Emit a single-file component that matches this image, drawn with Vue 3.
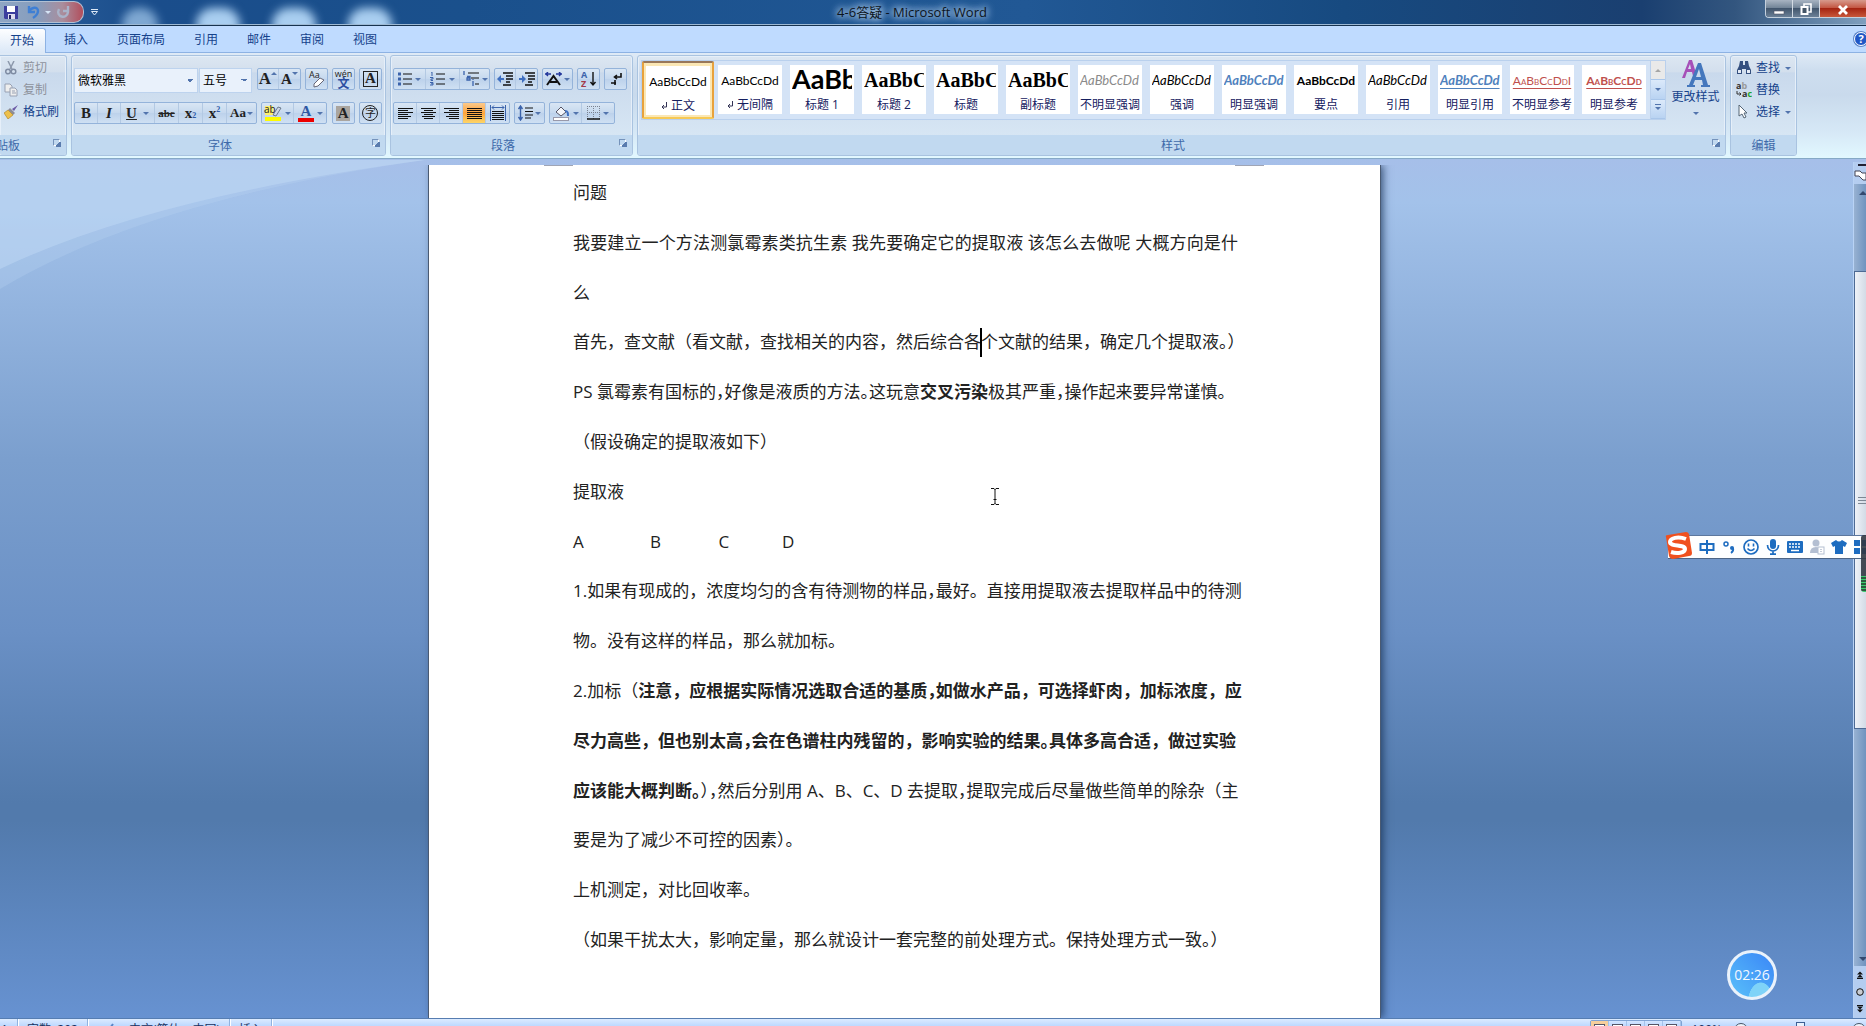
<script setup>
import { ref } from 'vue'

const tabs = ['开始', '插入', '页面布局', '引用', '邮件', '审阅', '视图']
const active = ref('开始')

const styles = [
  { name: '正文', mark: true, text: 'AaBbCcDd', kind: 'plain', on: true },
  { name: '无间隔', mark: true, text: 'AaBbCcDd', kind: 'plain' },
  { name: '标题 1', text: 'AaBb', kind: 'h1' },
  { name: '标题 2', text: 'AaBbC', kind: 'serif' },
  { name: '标题', text: 'AaBbC', kind: 'serif' },
  { name: '副标题', text: 'AaBbC', kind: 'serif' },
  { name: '不明显强调', text: 'AaBbCcDd', kind: 'it gray' },
  { name: '强调', text: 'AaBbCcDd', kind: 'it' },
  { name: '明显强调', text: 'AaBbCcDd', kind: 'it blue bold' },
  { name: '要点', text: 'AaBbCcDd', kind: 'plain bold' },
  { name: '引用', text: 'AaBbCcDd', kind: 'it' },
  { name: '明显引用', text: 'AaBbCcDd', kind: 'it blue bold rule' },
  { name: '不明显参考', text: 'AaBbCcDdI', kind: 'plain caps red rule' },
  { name: '明显参考', text: 'AaBbCcDd', kind: 'plain caps red rule bold' }
]

// Each line is a list of runs: t = text, b = bold, h = half-width punctuation, caret = insertion point
const lines = [
  [{ t: '问题' }],
  [{ t: '我要建立一个方法测氯霉素类抗生素 我先要确定它的提取液 该怎么去做呢 大概方向是什' }],
  [{ t: '么' }],
  [{ t: '首先，查文献（看文献，查找相关的内容，然后综合各' }, { caret: true }, { t: '个文献的结果，确定几个提取液' }, { t: '。', h: true }, { t: '）' }],
  [{ t: 'PS 氯霉素有国标的' }, { t: '，', h: true }, { t: '好像是液质的方法' }, { t: '。', h: true }, { t: '这玩意' }, { t: '交叉污染', b: true }, { t: '极其严重' }, { t: '，', h: true }, { t: '操作起来要异常谨慎。' }],
  [{ t: '（假设确定的提取液如下）' }],
  [{ t: '提取液' }],
  [{ t: 'A               B             C            D' }],
  [{ t: '1.如果有现成的，浓度均匀的含有待测物的样品' }, { t: '，', h: true }, { t: '最好。直接用提取液去提取样品中的待测' }],
  [{ t: '物。没有这样的样品，那么就加标。' }],
  [{ t: '2.加标（' }, { t: '注意，应根据实际情况选取合适的基质', b: true }, { t: '，', b: true, h: true }, { t: '如做水产品，可选择虾肉，加标浓度，应', b: true }],
  [{ t: '尽力高些，但也别太高', b: true }, { t: '，', b: true, h: true }, { t: '会在色谱柱内残留的，影响实验的结果', b: true }, { t: '。', b: true, h: true }, { t: '具体多高合适，做过实验', b: true }],
  [{ t: '应该能大概判断', b: true }, { t: '。', b: true, h: true }, { t: '），', h: true }, { t: '然后分别用 A、B、C、D 去提取' }, { t: '，', h: true }, { t: '提取完成后尽量做些简单的除杂（主' }],
  [{ t: '要是为了减少不可控的因素' }, { t: '）。', h: true }],
  [{ t: '上机测定，对比回收率。' }],
  [{ t: '（如果干扰太大，影响定量，那么就设计一套完整的前处理方式。保持处理方式一致' }, { t: '。', h: true }, { t: '）' }]
]
</script>

<template>
  <div class="screen">
    <div class="window">
      <header class="title">
        <i class="spot s1"></i><i class="spot s2"></i><i class="spot s3"></i><i class="spot s4"></i>
        <div class="quick">
          <button aria-label="保存"><svg width="14" height="14" viewBox="0 0 14 14"><path d="M0 1h14v13H1L0 13z" fill="#3c3f9e"/><path d="M3 1h8v6H3z" fill="#fff"/><path d="M4 9h7v5H4z" fill="#dde"/><path d="M5 10h2v4H5z" fill="#23246a"/></svg></button>
          <button aria-label="撤消"><svg width="13" height="14" viewBox="0 0 13 14"><path d="M2 1v6h6M2 7C4 2 11 1 11 6c0 3-2 5-5 7" fill="none" stroke="#3f7fd4" stroke-width="2.4"/></svg></button>
          <i class="arr"></i>
          <button aria-label="重复"><svg width="14" height="14" viewBox="0 0 14 14"><path d="M12 1v5H7M3 4C-1 12 11 15 12 7" fill="none" stroke="#a9b3c9" stroke-width="2.4"/></svg></button>
        </div>
        <svg class="more" width="7" height="7" viewBox="0 0 7 7"><path d="M0 .5h7" stroke="#dce8f6"/><path d="M.5 2.500h6L3.500 6z" fill="none" stroke="#dce8f6"/></svg>
        <h1>4-6答疑 - Microsoft Word</h1>
        <div class="winbtns">
          <button aria-label="最小化"><svg width="12" height="14" viewBox="0 0 12 14"><rect x="1" y="9" width="10" height="3" fill="#fff" stroke="#556" stroke-width=".6"/></svg></button>
          <button aria-label="还原"><svg width="12" height="14" viewBox="0 0 12 14"><path d="M4 5V2h7v8H8" fill="none" stroke="#fff" stroke-width="1.600"/><rect x="1.500" y="5" width="6" height="7" fill="#456" stroke="#fff" stroke-width="2"/></svg></button>
          <button class="close" aria-label="关闭"><svg width="12" height="14" viewBox="0 0 12 14"><path d="M2 4l8 8M10 4l-8 8" stroke="#fff" stroke-width="2.800"/></svg></button>
        </div>
      </header>

      <nav class="tabs">
        <button v-for="t in tabs" :key="t" :class="{ on: active === t }" @click="active = t">{{ t }}</button>
        <span class="fill"></span>
        <button class="help" aria-label="帮助">?</button>
      </nav>

      <div class="ribbon">
        <section class="group clip">
          <div class="col">
            <button class="off"><svg width="14" height="14" viewBox="0 0 14 14"><path d="M4 0l4 8M10 0L6 8" stroke="#8d99ac" stroke-width="1.500"/><circle cx="4" cy="10.500" r="2.300" fill="none" stroke="#7f8ca3" stroke-width="1.500"/><circle cx="9.500" cy="10.500" r="2.300" fill="none" stroke="#7f8ca3" stroke-width="1.500"/></svg>剪切</button>
            <button class="off"><svg width="14" height="14" viewBox="0 0 14 14"><path d="M1 1h5l2 2v6H1z" fill="#eee" stroke="#98a1b3"/><path d="M6 5h5l2 2v6H6z" fill="#eee" stroke="#98a1b3"/><path d="M8 8h3M8 10h4" stroke="#98a1b3"/></svg>复制</button>
            <button><svg width="14" height="14" viewBox="0 0 14 14"><path d="M14 0l-4 6-2-2z" fill="#6c5aa5"/><path d="M6 3l5 5-2 2-5-5z" fill="#8c8c96"/><path d="M4 5l5 5-5 4-4-6z" fill="#edc04c" stroke="#a97d1f" stroke-width=".6"/></svg>格式刷</button>
          </div>
          <footer>剪贴板<i class="launch"></i></footer>
        </section>

        <section class="group font">
          <div class="rows">
            <div class="row">
              <div class="combo"><select class="face" aria-label="字体"><option>微软雅黑</option></select><select class="size" aria-label="字号"><option>五号</option></select></div>
              <div class="set w22"><button class="sf big">A<i class="arr up raise"></i></button><button class="sf">A<i class="arr raise"></i></button></div>
              <div class="set w22"><button aria-label="清除格式"><svg width="18" height="18" viewBox="0 0 18 18"><text x="1" y="8" font-size="9" fill="#222">Aa</text><path d="M6 14l6-6 4 2-6 6-4 1z" fill="#fff" stroke="#667"/></svg></button></div>
              <div class="set w22"><button class="wen"><b>wén</b><em>文</em></button></div>
              <div class="set w22"><button class="sf"><span class="boxed">A</span></button></div>
            </div>
            <div class="row">
              <div class="set"><button class="sf w23">B</button><button class="sf w23 ital">I</button><button class="sf w35"><u>U</u><i class="arr"></i></button><button class="sf w24 small"><s>abc</s></button><button class="sf w24">x<sub>2</sub></button><button class="sf w24">x<sup>2</sup></button><button class="sf w29 mid">Aa<i class="arr"></i></button></div>
              <div class="set"><button class="w32"><svg width="18" height="18" viewBox="0 0 18 18"><rect x="1" y="2" width="8" height="9" fill="#ffef6a"/><text x="0" y="9" font-size="10" fill="#222">ab</text><path d="M9 11l5-8 3 1-5 8z" fill="#cfd6e6" stroke="#567" stroke-width=".8"/><path d="M1 13h16v4H1z" fill="#fdfb00"/></svg><i class="arr"></i></button><button class="w32"><span class="fcol">A</span><i class="arr"></i></button></div>
              <div class="set w22"><button class="sf"><span class="shade">A</span></button></div>
              <div class="set w22"><button><span class="ring">字</span></button></div>
            </div>
          </div>
          <footer>字体<i class="launch"></i></footer>
        </section>

        <section class="group para">
          <div class="rows">
            <div class="row">
              <div class="set">
                <button class="w32" aria-label="项目符号"><svg width="14" height="14" viewBox="0 0 14 14"><path d="M5 2h9M5 7h9M5 12h9" stroke="#111" stroke-width="1.200"/><path d="M0 2h3M0 7h3M0 12h3" stroke="#3b63ab" stroke-width="3"/></svg><i class="arr"></i></button>
                <button class="w35" aria-label="编号"><svg width="15" height="14" viewBox="0 0 15 14"><path d="M6 2h9M6 7h9M6 12h9" stroke="#111" stroke-width="1.200"/><path d="M1 0h1v4M0 5.500h3v1.500H1v1.500h2M0 10.500h3V13H0M1 11.800h2" fill="none" stroke="#3b63ab"/></svg><i class="arr"></i></button>
                <button class="w29" aria-label="多级列表"><svg width="18" height="16" viewBox="0 0 18 16"><path d="M6 2h11M9 7h8M13 13h4" stroke="#111" stroke-width="1.200"/><path d="M2 0v4M5 5.500h3V9H5V7h3M11 10v5M11 8v1" fill="none" stroke="#3b63ab" stroke-width="1.300"/></svg><i class="arr"></i></button>
              </div>
              <div class="set w22">
                <button aria-label="减少缩进"><svg width="16" height="14" viewBox="0 0 16 14"><path d="M6 1h10M9 4h7M9 7h7M9 10h4M6 13h8" stroke="#111" stroke-width="1.600"/><path d="M0 7l4-4v3h3v2H4v3z" fill="#3f6fc0"/></svg></button>
                <button aria-label="增加缩进"><svg width="16" height="14" viewBox="0 0 16 14"><path d="M6 1h10M9 4h7M9 7h7M9 10h4M6 13h8" stroke="#111" stroke-width="1.600"/><path d="M7 7L3 3v3H0v2h3v3z" fill="#3f6fc0"/></svg></button>
              </div>
              <div class="set"><button class="w29" aria-label="中文版式"><svg width="17" height="14" viewBox="0 0 17 14"><path d="M2 13l6.500-9 6.500 9M5 10h7" fill="none" stroke="#111" stroke-width="2"/><path d="M0 2h6M3 0L1 2l2 2M11 2h6M14 0l2 2-2 2" fill="none" stroke="#23379c" stroke-width="1.400"/></svg><i class="arr"></i></button></div>
              <div class="set w22"><button aria-label="排序"><svg width="16" height="18" viewBox="0 0 16 18"><text x="0" y="8" font-size="9" font-weight="700" fill="#3b63ab">A</text><text x="0" y="17" font-size="9" font-weight="700" fill="#a33a4a">Z</text><path d="M12 2v12M9.500 12l2.500 3 2.500-3" fill="none" stroke="#111" stroke-width="1.400"/></svg></button></div>
              <div class="set w22"><button aria-label="显示编辑标记"><svg width="12" height="14" viewBox="0 0 12 14"><path d="M11 1v4H5M7 3L4.500 5 7 7M5 8v5M1 11h5" fill="none" stroke="#111" stroke-width="1.600"/></svg></button></div>
            </div>
            <div class="row">
              <div class="set">
                <button class="w23" aria-label="左对齐"><svg width="15" height="12" viewBox="0 0 15 12"><path d="M0 1.500h15M0 3.500h10M0 5.500h15M0 7.500h10M0 9.500h13M0 11.500h10" stroke="#111"/></svg></button>
                <button class="w23" aria-label="居中"><svg width="15" height="12" viewBox="0 0 15 12"><path d="M0 1.500h15M3 3.500h9M0 5.500h15M3 7.500h9M1 9.500h13M3 11.500h9" stroke="#111"/></svg></button>
                <button class="w23" aria-label="右对齐"><svg width="15" height="12" viewBox="0 0 15 12"><path d="M0 1.500h15M5 3.500h10M0 5.500h15M5 7.500h10M2 9.500h13M5 11.500h10" stroke="#111"/></svg></button>
                <button class="w23 hot" aria-label="两端对齐"><svg width="15" height="12" viewBox="0 0 15 12"><path d="M0 1.500h15M0 3.500h15M0 5.500h15M0 7.500h15M0 9.500h15M0 11.500h15" stroke="#111"/></svg></button>
                <button class="w23" aria-label="分散对齐"><svg width="16" height="16" viewBox="0 0 16 16"><path d="M2 6.500h12M2 8.500h12M2 10.500h12M2 12.500h12M2 14.500h12" stroke="#111"/><path d="M.5 0v16M15.500 0v16M2 2.500h12M4 .5l-2 2 2 2M12 .5l2 2-2 2" fill="none" stroke="#3b63ab"/></svg></button>
              </div>
              <div class="set"><button class="w29" aria-label="行距"><svg width="15" height="16" viewBox="0 0 15 16"><path d="M7 3h8M7 6.500h8M7 10h8M7 13h6" stroke="#111" stroke-width="1.200"/><path d="M2.500 1v14M.5 4l2-3 2 3M.5 12l2 3 2-3" fill="none" stroke="#3b63ab" stroke-width="1.400"/></svg><i class="arr"></i></button></div>
              <div class="set">
                <button class="w32" aria-label="底纹"><svg width="17" height="16" viewBox="0 0 17 16"><path d="M3 7l5-5 5 5-5 4z" fill="#f4f6fb" stroke="#556"/><path d="M12 6c3 0 3 2 3 5" fill="none" stroke="#3f6fc0" stroke-width="2"/><rect x=".5" y="12.500" width="15" height="3" fill="#fff" stroke="#99a"/></svg><i class="arr"></i></button>
                <button class="w32" aria-label="边框"><svg width="13" height="14" viewBox="0 0 13 14"><path d="M0 .5h13M0 6.500h13M.5 0v13M6.500 0v13M12.500 0v13" stroke="#7a8291" stroke-dasharray="1 1"/><path d="M0 13h13" stroke="#111" stroke-width="1.500"/></svg><i class="arr"></i></button>
              </div>
            </div>
          </div>
          <footer>段落<i class="launch"></i></footer>
        </section>

        <section class="group stylesgrp">
          <div class="stylebody">
            <div class="gallery">
              <button v-for="(s, i) in styles" :key="i" class="tile" :class="{ sel: s.on }">
                <span class="card"><span class="prev" :class="s.kind">{{ s.text }}</span><span class="nm"><svg v-if="s.mark" width="6" height="8" viewBox="0 0 6 8"><path d="M5.500 0v5H1M3 3L1 5l2 2" fill="none" stroke="#335"/></svg>{{ s.name }}</span></span>
              </button>
              <div class="spin">
                <button class="dim" aria-label="上一行"><i class="arr up"></i></button>
                <button aria-label="下一行"><i class="arr"></i></button>
                <button aria-label="其他"><i class="arr bar"></i></button>
              </div>
            </div>
            <button class="change">
              <svg width="30" height="28" viewBox="0 0 30 28"><path d="M1 18L8 0h3l4 13-3 3-1-4H6l-2 6zM7 9h3L9 4z" fill="#a650b8" fill-rule="evenodd"/><path d="M6 27v-2h2L17 3h3l7 22h2v2h-9v-2h2l-1-5h-7l-2 5h2v2zM15 17h5l-2-8z" fill="#4477bd" fill-rule="evenodd"/></svg>
              更改样式<i class="arr"></i>
            </button>
          </div>
          <footer>样式<i class="launch"></i></footer>
        </section>

        <section class="group edit">
          <div class="col">
            <button><svg width="16" height="14" viewBox="0 0 16 14"><path d="M4 0h3v4h2V0h3l1 5 2 4v4h-5V8H6v5H1V9l2-4z" fill="#35507f"/><path d="M2 9h3v3H2zM11 9h3v3h-3z" fill="#e4ebf6"/></svg>查找<i class="arr"></i></button>
            <button><svg width="16" height="16" viewBox="0 0 16 16"><text x="0" y="7" font-size="9" font-weight="700" fill="#333">a<tspan fill="#999">b</tspan></text><text x="6" y="15" font-size="9" font-weight="700" fill="#333">a<tspan fill="#1fa32f">c</tspan></text><path d="M1 9v3h4M3.500 10.500L5 12l-1.500 1.500" fill="none" stroke="#333"/></svg>替换</button>
            <button><svg width="16" height="14" viewBox="0 0 16 14"><path d="M3 0v11l3-2 2 4 2-1-2-4h3z" fill="#fff" stroke="#567"/></svg>选择<i class="arr"></i></button>
          </div>
          <footer class="mid0">编辑</footer>
        </section>
      </div>

      <main class="work">
        <svg class="swoosh" width="430" height="134" viewBox="0 0 430 134"><path d="M0 130Q150 40 425 1H0z" fill="#b9d3f2" opacity=".3"/><path d="M0 110Q150 38 425 1L0 1z" fill="#c3dcf6" opacity=".45"/></svg>
        <div class="canvas">
          <article class="page">
            <i class="crop l"></i><i class="crop r"></i>
            <p v-for="(l, i) in lines" :key="i" :class="{ full: i === 1 }"><template v-for="(r, j) in l" :key="j"><i v-if="r.caret" class="caret"></i><span v-else :class="{ b: r.b, h: r.h }">{{ r.t }}</span></template></p>
            <svg class="ibeam" width="8" height="17" viewBox="0 0 8 17"><path d="M0 .5h3l1 1 1-1h3M4 1v15M0 16.500h3l1-1 1 1h3M2.500 11.500h3" fill="none" stroke="#111"/></svg>
          </article>
        </div>
        <aside class="scroll">
          <button class="split" aria-label="标尺"><svg width="12" height="18" viewBox="0 0 12 18"><path d="M4 1h8" stroke="#223" stroke-width="2"/><path d="M1 7h5l2 2h4v7H9l-4-4H1z" fill="#fff" stroke="#445"/></svg></button>
          <div class="track">
            <i class="arr up"></i>
            <div class="thumb"><i></i></div>
            <i class="arr"></i>
          </div>
          <div class="browse">
            <svg width="8" height="8" viewBox="0 0 8 8"><path d="M1 3.500L4 .5l3 3zM1 6.500l3-3 3 3zM1 7h6v1H1z" fill="#111"/></svg>
            <svg width="8" height="8" viewBox="0 0 8 8"><circle cx="4" cy="4" r="3.300" fill="#c9ccd2" stroke="#111"/></svg>
            <svg width="8" height="8" viewBox="0 0 8 8"><path d="M1 0h6v1H1zM1 1.500l3 3 3-3zM1 4.500l3 3 3-3z" fill="#111"/></svg>
          </div>
        </aside>

        <div class="ime">
          <svg class="slogo" width="28" height="28" viewBox="0 0 28 28"><path d="M2 5Q1 3 4 3L22 0q2 0 3 2l3 19q0 3-3 3L9 27q-3 0-4-3z" fill="#f0501e"/><path d="M22 7C14 4 6 6 6 10c0 5 15 2 15 7 0 4-8 5-14 3" fill="none" stroke="#fff" stroke-width="4"/></svg>
          <svg width="16" height="16" viewBox="0 0 16 16"><path d="M1.500 5h13v6h-13zM8 1v14" fill="none" stroke="#1d6cc0" stroke-width="2"/></svg>
          <svg width="16" height="16" viewBox="0 0 16 16"><circle cx="5" cy="5" r="2" fill="none" stroke="#1d6cc0" stroke-width="1.500"/><circle cx="11" cy="9" r="2" fill="#1d6cc0"/><path d="M12 9q1 3-2 5" fill="none" stroke="#1d6cc0" stroke-width="1.800"/></svg>
          <svg width="16" height="16" viewBox="0 0 16 16"><circle cx="8" cy="8" r="7" fill="none" stroke="#1d6cc0" stroke-width="1.700"/><path d="M5.500 4.500v3M10.500 4.500v3M4.500 9.500q3.500 4 7 0" fill="none" stroke="#1d6cc0" stroke-width="1.600"/></svg>
          <svg width="16" height="16" viewBox="0 0 16 16"><rect x="5" y="0" width="6" height="10" rx="3" fill="#1d6cc0"/><path d="M2.500 6c0 8 11 8 11 0M8 12v4M5 15.200h6" fill="none" stroke="#1d6cc0" stroke-width="1.700"/></svg>
          <svg width="16" height="16" viewBox="0 0 16 16"><rect x="0" y="2" width="16" height="12" rx="1" fill="#1d6cc0"/><path d="M2 5h12M2 8h12" stroke="#fff" stroke-width="1.500" stroke-dasharray="2 1"/><path d="M4 11.500h8" stroke="#fff" stroke-width="1.500"/></svg>
          <svg width="16" height="16" viewBox="0 0 16 16"><circle cx="7" cy="4" r="3.500" fill="#b4bfd2"/><path d="M1 14q0-6 6-6t6 6z" fill="#b4bfd2"/><rect x="9" y="8" width="6" height="7" fill="#fff" stroke="#b4bfd2"/><path d="M12 10v1M12 12v1" stroke="#8d9ab3"/></svg>
          <svg width="16" height="16" viewBox="0 0 16 16"><path d="M5 1q3 3 6 0l5 3-2 4-2-1v8H4V7L2 8 0 4z" fill="#1d6cc0"/></svg>
          <svg width="16" height="16" viewBox="0 0 16 16"><path d="M1 1h6v6H1zM9 1h6v6H9zM1 9h6v6H1zM9 9h6v6H9z" fill="#1d6cc0"/></svg>
        </div>
        <div class="meter"></div>
        <div class="timer">02:26</div>
      </main>

      <footer class="status">
        <span class="st pg">1</span><span class="st wc">字数: 292</span>
        <span class="st sp"><svg width="14" height="14" viewBox="0 0 14 14"><path d="M2 7l3 5 8-11" fill="none" stroke="#5a86c6" stroke-width="2"/></svg></span>
        <span class="st lang">中文(简体，中国)</span><span class="st ins">插入</span>
        <span class="fill"></span>
        <div class="views"><button v-for="n in 5" :key="n" :class="{ on: n === 1 }" aria-label="视图"><i></i></button></div>
        <span class="pct">100%</span>
        <label class="zoom"><i class="knob">−</i><input type="range" min="10" max="190" value="100" aria-label="显示比例"><i class="knob">+</i></label>
      </footer>
    </div>
  </div>
</template>

<style>
body { margin: 0; }
</style>

<style scoped>
.screen { height: 100vh; overflow: hidden; font: 12px/16px "Open Sans", "Noto Sans CJK SC", sans-serif; color: #15428b; }
.window { min-height: calc(100vh + 14px); display: flex; flex-direction: column; }
button, select { font: inherit; color: inherit; border: 0; background: none; padding: 0; margin: 0; }
button { display: flex; align-items: center; justify-content: center; }
i { font-style: normal; }
svg { flex: none; }
.fill { flex: 1; }
.arr { flex: none; width: 0; height: 0; border: 3px solid transparent; border-top: 3px solid #5274ad; border-bottom: 0; }
.arr.up { border-top: 0; border-bottom: 3px solid #5274ad; }
.arr.bar { position: relative; }
.arr.bar::before { content: ""; position: absolute; left: -3px; top: -6px; width: 6px; height: 1px; background: #5274ad; }

.title { position: relative; height: 24px; display: flex; align-items: center; overflow: hidden; border-bottom: 1px solid #9db9d4; box-shadow: 0 1px #16324f; margin-bottom: 1px; background: linear-gradient(90deg, #2c609c, #1a4d8b 8%, #1a508c 25%, #215895 55%, #174a80 72%, #1a3f70 88%, #33567f 93%, #7f9fbe); }
.spot { position: absolute; top: 8px; width: 44px; height: 34px; border-radius: 18px; background: #a9cef0; filter: blur(5px); }
.s1 { left: 122px; width: 36px; opacity: .7; }
.s2 { left: 196px; }
.s3 { left: 272px; }
.s4 { left: 348px; }
.quick { position: relative; width: 84px; height: 22px; box-sizing: border-box; padding-left: 4px; display: flex; align-items: center; gap: 9px; border: 1px solid #b0c0d4; border-left: 0; border-radius: 0 10px 10px 0; background: linear-gradient(90deg, #8fa6c4, #869dbd 45%, #a98e9d 75%, #b24e5c); }
.quick .arr { margin: 0 -4px; border-top-color: #d5e4f5; }
.more { margin-left: 7px; position: relative; }
h1 { position: absolute; left: 0; right: 42px; margin: 0; text-align: center; font-size: 13px; font-weight: 400; line-height: 27px; color: #0c1420; text-shadow: 0 0 6px #b4d0ee, 0 0 8px #b4d0ee, 0 0 10px #b4d0ee; }
.winbtns { position: relative; margin-left: auto; align-self: flex-start; display: flex; height: 17px; border: 1px solid #c4d0dd; border-top: 0; border-right: 0; border-radius: 0 0 0 4px; overflow: hidden; }
.winbtns button { width: 27px; background: linear-gradient(#a8b4c2, #6d8094 50%, #42566d 50%, #6b8097); border-right: 1px solid #d3dbe4; }
.winbtns .close { width: 46px; border: 0; background: linear-gradient(#d79a8c, #c1503c 50%, #a52512 50%, #c8573a); }

.tabs { height: 27px; display: flex; align-items: flex-end; background: #bfdbff; box-sizing: border-box; border-bottom: 1px solid #8db2e3; }
.tabs button { height: 25px; padding: 0 15px 0 14px; position: relative; }
.tabs .on { padding: 0 11px 0 10px; margin-right: 4px; border: 1px solid #8db2e3; border-left: 0; border-bottom: 0; margin-bottom: -1px; border-radius: 0 3px 0 0; background: linear-gradient(#fdfeff, #dbe8f7); }
.tabs .help { width: 14px; height: 14px; box-sizing: border-box; padding: 0; margin: 0 -2px 6px 0; border-radius: 50%; border: 1px solid #fff; box-shadow: 0 0 0 1px #5a84c8; background: #2057c6; color: #fff; font-weight: 700; font-size: 11px; }

.ribbon { height: 106px; box-sizing: border-box; padding-top: 2px; display: flex; align-items: flex-start; gap: 4px; border-bottom: 1px solid #86a9c6; background: linear-gradient(#dfeaf6, #cedeef 16%, #c9daec 40%, #d6e8f6 75%, #e2f8ff); overflow: hidden; }
.group { flex: none; height: 101px; box-sizing: border-box; display: flex; flex-direction: column; border: 1px solid #a9c3e0; border-radius: 3px; box-shadow: inset 0 0 0 1px #e6eff9; background: linear-gradient(#dce7f2, #d3dfed 16%, #c9d9ec 17%, #d9e8f5 90%); }
.group > footer { position: relative; box-sizing: border-box; height: 20px; line-height: 21px; padding-right: 17px; text-align: center; color: #3e6aaa; background: #c1d9f0; border-radius: 0 0 2px 2px; }
.group > .mid0 { padding-right: 0; }
.launch { position: absolute; right: 6px; top: 4px; width: 5px; height: 5px; border: 1px solid #7593bb; border-right-color: #fff; border-bottom-color: #fff; }
.launch::after { content: ""; position: absolute; left: 2px; top: 2px; width: 4px; height: 4px; border: solid #5a7cae; border-width: 0 1px 1px 0; background: linear-gradient(135deg, transparent 40%, #5a7cae 40%); }
.clip { width: 67px; border-left: 0; border-radius: 0 3px 3px 0; }
.clip > footer { text-align: left; text-indent: -16px; overflow: hidden; }
.font { width: 315px; }
.para { width: 243px; }
.stylesgrp { width: 1089px; }
.edit { width: 67px; }
.col { flex: 1; display: flex; flex-direction: column; align-items: flex-start; padding: 1px 4px 0; }
.col button { height: 22px; gap: 4px; white-space: nowrap; }
.col .arr { margin-left: 1px; }
.clip .col button { gap: 5px; }
.edit .col { padding-left: 5px; }
.off { color: #8d929c !important; }
.rows { flex: 1; display: flex; flex-direction: column; gap: 12px; padding: 12px 3px 0 2px; }
.row { display: flex; gap: 4px; height: 22px; }
.font .row { justify-content: space-between; }
.set { display: flex; box-sizing: border-box; border: 1px solid #94b3da; border-radius: 2px; background: linear-gradient(#d9e6f4, #c5d8ee 50%, #bcd1eb 50%, #cfe0f3); }
.set button { gap: 3px; border-right: 1px solid #b3c9e3; box-sizing: border-box; color: #222; height: 20px; }
.set button:last-child { border-right: 0; }
.set .arr { margin-left: 1px; }
.w22 button { width: 21px; }
.w23 { width: 23px; } .w24 { width: 24px; } .w29 { width: 29px; } .w32 { width: 32px; } .w35 { width: 34px; }
.row .w29, .row .w32 { gap: 2px; }
.row .w29 .arr { margin-left: 0; }
.set .sf { gap: 0; font-family: "Liberation Serif", "Noto Sans CJK SC", serif; font-weight: 700; font-size: 15px; }
.sf .arr { margin-left: 6px; }
.set .mid .arr { margin-left: 1px; }
.set .arr.raise { margin: 3px 0 0; align-self: flex-start; }
.set .big { font-size: 17px; }
.set .small { font-size: 11px; }
.set .mid { font-size: 13px; }
.ital { font-style: italic; }
.sf sub, .sf sup { font-size: 8px; line-height: 8px; color: #2f5aa8; }
.sf sub { align-self: flex-end; padding-bottom: 3px; }
.sf sup { align-self: flex-start; padding-top: 3px; }
.set .wen { flex-direction: column; line-height: 9px; gap: 0; }
.wen b { font-size: 9px; line-height: 8px; font-weight: 400; }
.wen em { font-style: normal; color: #2c4fa2; font-size: 12px; line-height: 11px; font-weight: 700; }
.boxed { border: 1px solid #222; width: 13px; line-height: 13px; height: 14px; }
.shade { background: #aaa59f; width: 14px; line-height: 15px; }
.ring { border: 1px solid #222; border-radius: 50%; width: 14px; height: 14px; line-height: 13px; font-size: 11px; }
.fcol { width: 16px; border-bottom: 4px solid #ec0000; color: #2e57a3; font: 700 15px/13px "Liberation Serif", serif; }
.hot { background: linear-gradient(#fbc98b, #fda43d 50%, #fdd567); }
.combo { display: flex; gap: 1px; height: 25px; margin-right: 1px; }
.combo select { appearance: none; box-sizing: border-box; color: #000; padding-left: 3px; border: 1px solid #bdd3ee; background: linear-gradient(225deg, #5274ad 50%, transparent 50%) right 7px center / 3px 3px no-repeat, linear-gradient(135deg, #5274ad 50%, transparent 50%) right 4px center / 3px 3px no-repeat, #e9f1fb; }
.face { width: 124px; }
.size { width: 53px; }

.stylebody { flex: 1; display: flex; padding: 4px 3px 0; gap: 3px; align-items: flex-start; }
.gallery { display: flex; height: 60px; box-sizing: border-box; border: 1px solid #b9d0ed; background: #d4e3f6; }
.tile { width: 72px; height: 58px; padding: 0 0 1px; box-sizing: border-box; }
.card { width: 64px; height: 49px; display: flex; flex-direction: column; background: #fff; overflow: hidden; color: #15205f; }
.sel { border: 2px solid #e8a23c; border-top-color: #98775a; border-bottom-color: #f6c956; background: #fbe7b4; border-radius: 2px; padding: 0; }
.prev { height: 31px; margin: 0 2px; line-height: 31px; font-family: Lato, sans-serif; font-size: 13px; color: #000; white-space: nowrap; overflow: hidden; text-align: left; flex: none; }
.nm { display: flex; align-items: center; justify-content: center; gap: 4px; line-height: 18px; white-space: nowrap; }
.plain { font-size: 12px; text-align: center; }
.h1 { font-size: 27px; font-weight: 700; line-height: 27px; }
.serif { font-family: "Liberation Serif", serif; font-weight: 700; font-size: 20px; }
.it { font-style: italic; }
.bold { font-weight: 700; }
.gray { color: #8a8a8a; }
.blue { color: #4f81bd; }
.red { color: #c0504d; }
.rule { text-decoration: underline; text-underline-offset: 3px; }
.caps { font-variant: small-caps; }
.spin { width: 14px; display: flex; flex-direction: column; border-left: 1px solid #b9d0ed; }
.spin button { flex: 1; border-bottom: 1px solid #a9c6ea; background: linear-gradient(#dbe9fa, #b9d3f2); }
.spin .dim { background: #e9e9e9; }
.spin .dim .arr { border-bottom-color: #a5a5a5; }
.change { flex: 1; flex-direction: column; line-height: 18px; white-space: nowrap; }
.change .arr { margin-top: 6px; }

.work { position: relative; flex: 1; display: flex; padding-top: 6px; overflow: hidden; background: linear-gradient(#a6bfe9, #a3c2ea 5%, #7b9fce 35%, #6a90c5 55%, #527aac 75%, #527aac 77%, #6792d1); }
.swoosh { position: absolute; left: 0; top: 0; }
.canvas { flex: 1; display: flex; justify-content: flex-start; position: relative; overflow: hidden; }
.page { position: relative; width: 951px; box-sizing: border-box; margin-left: 429px; padding: 3px 0 53px 144px; background: #fff; box-shadow: 0 0 0 1px #4a5a72, 3px 0 8px rgba(20, 45, 80, .75); display: flex; flex-direction: column; color: #222; font-size: 17px; }
.page p { flex: 1; min-height: 44px; margin: 0; width: 665px; display: flex; align-items: center; white-space: pre; text-spacing-trim: space-all; }
.page p span { flex: none; }
.page p.full { display: flow-root; line-height: 50px; white-space: normal; text-align: justify; text-align-last: justify; }
.b { font-weight: 700; }
.h { font-feature-settings: "halt"; }
.caret { flex: none; width: 2px; height: 29px; margin: 0 -1px; background: #000; position: relative; }
.crop { position: absolute; top: 0; width: 29px; height: 1px; background: #a0a5b5; }
.crop.l { left: 115px; }
.crop.r { right: 116px; }
.ibeam { position: absolute; left: 562px; top: 323px; }

.scroll { width: 12px; overflow: hidden; display: flex; flex-direction: column; margin-top: -3px; background: #b4cdf0; border-left: 1px solid #b9d3f5; }
.split { height: 22px; }
.track { flex: 1; display: flex; flex-direction: column; align-items: flex-end; padding-top: 7px; padding-bottom: 5px; background: linear-gradient(90deg, #98b2d2, #6f93bf); }
.track .arr { border-width: 4px; border-bottom-width: 0; border-top-color: #33496f; margin-right: -1px; }
.track .arr.up { border-width: 0 4px 4px; border-bottom-color: #33496f; margin-bottom: 76px; }
.thumb { width: 12px; height: 458px; margin-bottom: auto; box-sizing: border-box; border: 1px solid #4d6a94; border-right: 0; background: linear-gradient(90deg, #eef2f8, #d3dbe6); display: flex; align-items: center; justify-content: flex-end; }
.thumb i { width: 8px; height: 7px; background: repeating-linear-gradient(#7d8794 0 1px, transparent 1px 3px); }
.browse { height: 52px; display: flex; flex-direction: column; justify-content: space-around; align-items: center; }

.ime { position: absolute; right: -3px; top: 377px; height: 22px; display: flex; align-items: center; gap: 6px; padding-left: 31px; background: #fdfeff; box-shadow: 0 1px #4d6586, 0 -1px #5c779e; }
.slogo { position: absolute; left: -4px; top: -4px; }
.meter { position: absolute; right: 0; top: 376px; width: 5px; height: 57px; border-radius: 3px 0 0 3px; background: repeating-linear-gradient(#3ecb70 0 1px, #2b5a3c 1px 3px) bottom / 100% 16px no-repeat, rgba(50, 56, 66, .9); }
.timer { position: absolute; right: 89px; bottom: 18px; width: 44px; height: 44px; border: 3px solid #eaf2fb; border-radius: 50%; background: radial-gradient(ellipse at 70% 118%, #7fd3f8 30%, transparent 31%), linear-gradient(45deg, #59c0fa, #3a86f6); color: #f2f8ff; font: 14px/44px "Open Sans", sans-serif; text-align: center; }

.status { height: 21px; display: flex; align-items: center; color: #15305f; border-top: 1px solid #567db1; background: linear-gradient(#dcebff, #c0daff 30%, #a9caf5); overflow: hidden; }
.st { box-sizing: border-box; border-right: 1px solid #90b2df; line-height: 21px; box-shadow: 1px 0 #fff; white-space: nowrap; }
.pg { width: 18px; padding-left: 1px; }
.wc { width: 70px; padding-left: 9px; }
.sp { width: 32px; padding-left: 12px; border: 0; box-shadow: none; }
.sp svg { display: block; }
.lang { width: 110px; padding-left: 9px; }
.ins { width: 42px; padding-left: 9px; }
.views { display: flex; border: 1px solid #7fa3d4; border-radius: 2px; }
.views button { width: 18px; height: 17px; border-right: 1px solid #a4c2ea; }
.views .on { background: #f6cf9c; }
.views i { width: 9px; height: 9px; border: 1px solid #556; background: #fff; }
.pct { margin: 0 12px 0 9px; }
.zoom { display: flex; align-items: center; }
.knob { width: 12px; height: 12px; border: 1px solid #456; border-radius: 50%; line-height: 11px; text-align: center; background: #eef4fc; }
.zoom input { width: 104px; margin: 0; appearance: none; height: 16px; background: linear-gradient(#6d8fbf, #6d8fbf) center / 100% 1px no-repeat; }
.zoom input::-webkit-slider-thumb { appearance: none; width: 9px; height: 15px; border: 1px solid #3d5f94; background: #e9f2fd; }
</style>
